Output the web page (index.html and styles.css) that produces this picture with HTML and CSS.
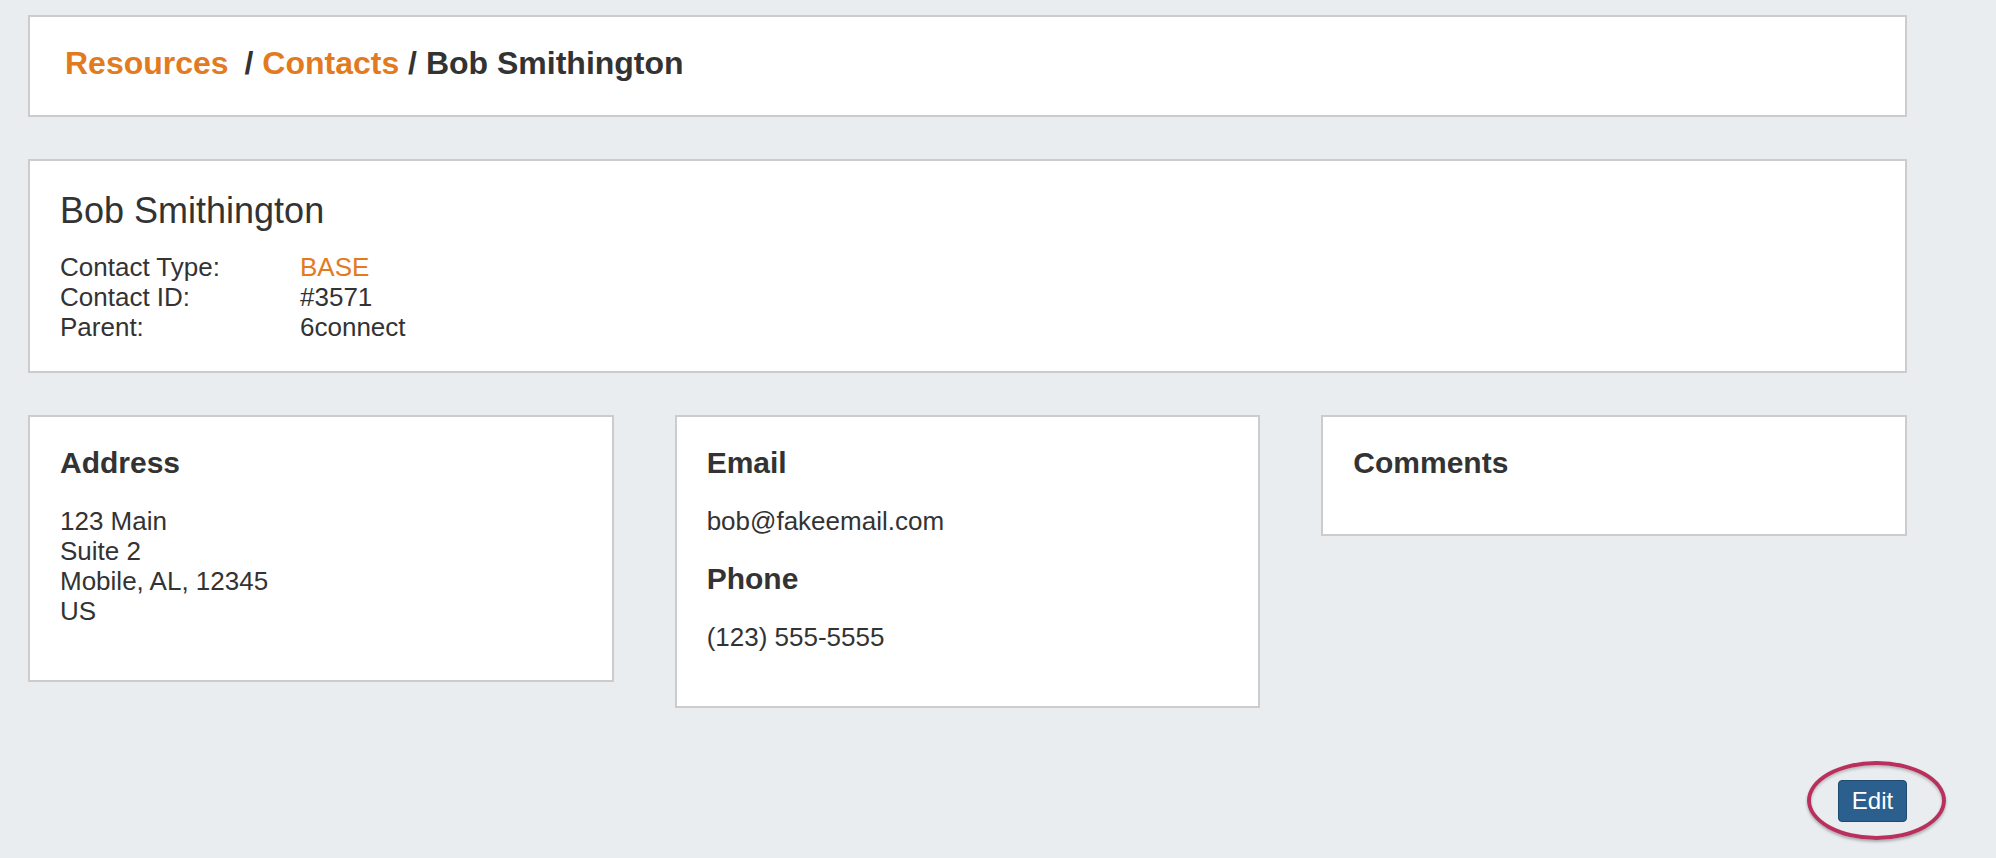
FILE: index.html
```html
<!DOCTYPE html>
<html lang="en">
<head>
<meta charset="utf-8">
<title>Bob Smithington - Contacts</title>
<link rel="stylesheet" href="styles.css">
</head>
<body>
<div class="page">
  <div class="panel crumbs">
    <a class="crumb-link crumb-first" href="#">Resources</a> / <a class="crumb-link" href="#">Contacts</a> / <span class="crumb-current">Bob Smithington</span>
  </div>

  <div class="panel summary">
    <div class="contact-name">Bob Smithington</div>
    <div class="facts">
      <div class="fact-label">Contact Type:</div>
      <div class="fact-value fact-accent">BASE</div>
      <div class="fact-label">Contact ID:</div>
      <div class="fact-value">#3571</div>
      <div class="fact-label">Parent:</div>
      <div class="fact-value">6connect</div>
    </div>
  </div>

  <div class="cards">
    <div class="panel card">
      <h3 class="card-title">Address</h3>
      <p class="card-text">123 Main<br>Suite 2<br>Mobile, AL, 12345<br>US</p>
    </div>
    <div class="panel card">
      <h3 class="card-title">Email</h3>
      <p class="card-text">bob@fakeemail.com</p>
      <h3 class="card-title">Phone</h3>
      <p class="card-text">(123) 555-5555</p>
    </div>
    <div class="panel card">
      <h3 class="card-title">Comments</h3>
    </div>
  </div>

  <div class="actions">
    <div class="edit-wrap">
      <button class="btn-edit" type="button">Edit</button>
      <span class="highlight-ring"></span>
    </div>
  </div>
</div>
</body>
</html>
```

FILE: styles.css
```css
html, body {
  margin: 0;
  padding: 0;
}

body {
  background: #e9edf0;
  color: #333333;
  font-family: "Liberation Sans", Arial, sans-serif;
  height: 858px;
  overflow: hidden;
}

.page {
  width: 1879px;
  padding: 15px 0 0 28px;
}

.panel {
  background: #ffffff;
  border: 2px solid #cccccc;
  box-sizing: border-box;
}

/* Breadcrumb */
.crumbs {
  padding: 28px 35px 34px;
  font-size: 32px;
  line-height: 36px;
  font-weight: bold;
  color: #333333;
}

.crumb-link {
  color: #e27b1f;
  text-decoration: none;
}

.crumb-first {
  margin-right: 7px;
}

.crumb-current {
  color: #333333;
}

/* Summary */
.summary {
  margin-top: 42px;
  padding: 30px 30px 29px;
}

.contact-name {
  font-size: 36px;
  line-height: 40px;
}

.facts {
  margin-top: 21px;
  display: grid;
  grid-template-columns: 240px auto;
  font-size: 26px;
  line-height: 30px;
}

.fact-accent {
  color: #e27b1f;
}

/* Cards */
.cards {
  margin-top: 42px;
  display: grid;
  grid-template-columns: 1fr 1fr 1fr;
  column-gap: 61px;
  align-items: start;
}

.card {
  padding: 29px 30px 28px;
}

.card-title {
  margin: 0 0 26px;
  font-size: 30px;
  line-height: 34px;
  font-weight: bold;
}

.card-text {
  margin: 0 0 26px;
  font-size: 26px;
  line-height: 30px;
}

/* Actions */
.actions {
  margin-top: 72px;
  display: flex;
  justify-content: flex-end;
}

.edit-wrap {
  position: relative;
}

.btn-edit {
  display: block;
  width: 69px;
  height: 42px;
  box-sizing: border-box;
  padding: 0;
  background: #2a5f8e;
  border: 1px solid #1f4a70;
  border-radius: 4px;
  color: #ffffff;
  font-family: "Liberation Sans", Arial, sans-serif;
  font-size: 24px;
  line-height: 40px;
  text-align: center;
  cursor: pointer;
}

.highlight-ring {
  position: absolute;
  left: -31px;
  top: -19px;
  width: 139px;
  height: 79px;
  box-sizing: border-box;
  border: 4px solid #b8305b;
  border-radius: 50%;
  box-shadow: 0 2px 3px rgba(0, 0, 0, 0.28), inset 0 2px 3px rgba(0, 0, 0, 0.22);
  pointer-events: none;
}
```
